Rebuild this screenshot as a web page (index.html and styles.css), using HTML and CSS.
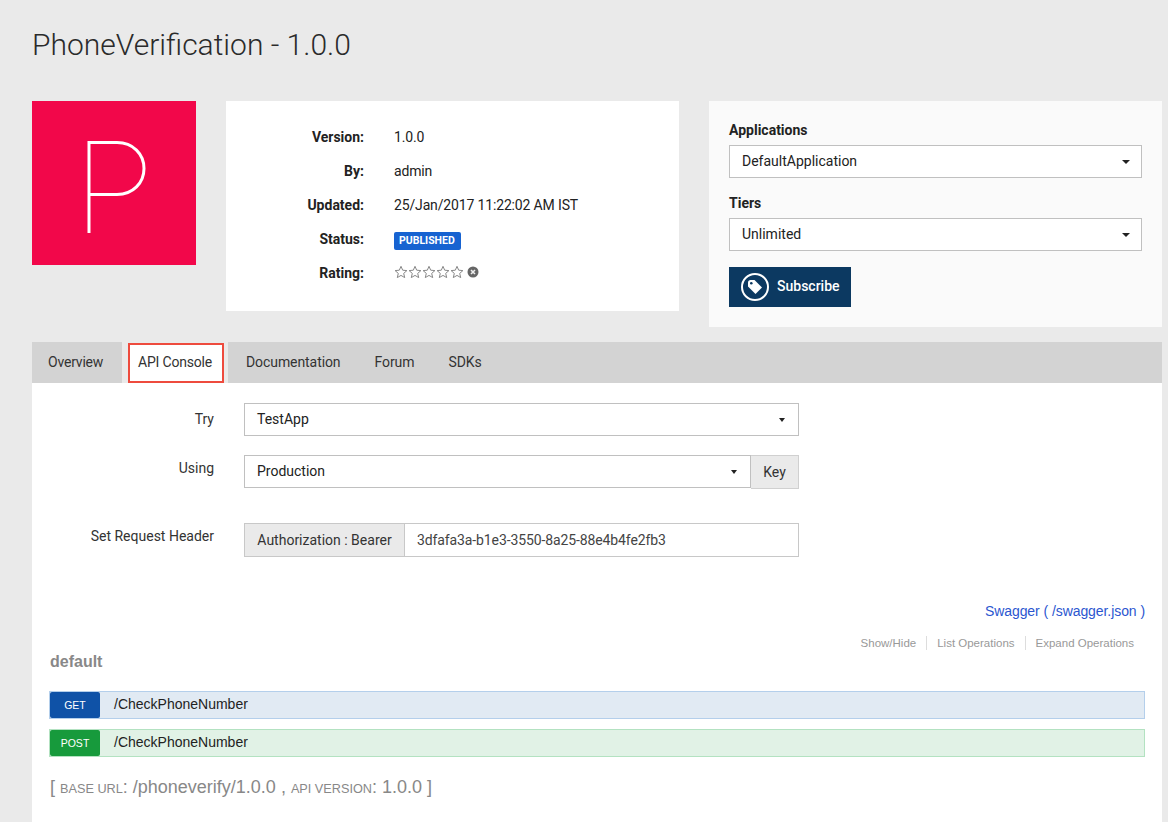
FILE: index.html
```html
<!DOCTYPE html>
<html>
<head>
  <title>PhoneVerification - 1.0.0</title>
  <link rel="stylesheet" href="styles.css">
</head>
<body>
  <div class="page">

    <h1 class="page-title">PhoneVerification - 1.0.0</h1>

    <div class="top-row">
      <div class="api-logo">
        <svg class="api-logo-letter" width="60" height="92" viewBox="0 0 60 92">
          <path d="M3 92V1.500H31C47 1.500 58 13 58 27.500C58 42 47 53.500 31 53.500H3" fill="none" stroke="#fff" stroke-width="3"/>
        </svg>
      </div>

      <div class="info-card">
        <div class="info-row"><span class="info-label">Version:</span><span class="info-value">1.0.0</span></div>
        <div class="info-row"><span class="info-label">By:</span><span class="info-value">admin</span></div>
        <div class="info-row"><span class="info-label">Updated:</span><span class="info-value">25/Jan/2017 11:22:02 AM IST</span></div>
        <div class="info-row"><span class="info-label">Status:</span><span class="status-badge">PUBLISHED</span></div>
        <div class="info-row">
          <span class="info-label">Rating:</span>
          <span class="stars">
            <svg width="14" height="14" viewBox="0 0 14 14"><path class="star" d="M7 1.300L8.700 5.200L12.900 5.600L9.700 8.400L10.700 12.600L7 10.400L3.300 12.600L4.300 8.400L1.100 5.600L5.300 5.200Z"/></svg>
            <svg width="14" height="14" viewBox="0 0 14 14"><path class="star" d="M7 1.300L8.700 5.200L12.900 5.600L9.700 8.400L10.700 12.600L7 10.400L3.300 12.600L4.300 8.400L1.100 5.600L5.300 5.200Z"/></svg>
            <svg width="14" height="14" viewBox="0 0 14 14"><path class="star" d="M7 1.300L8.700 5.200L12.900 5.600L9.700 8.400L10.700 12.600L7 10.400L3.300 12.600L4.300 8.400L1.100 5.600L5.300 5.200Z"/></svg>
            <svg width="14" height="14" viewBox="0 0 14 14"><path class="star" d="M7 1.300L8.700 5.200L12.900 5.600L9.700 8.400L10.700 12.600L7 10.400L3.300 12.600L4.300 8.400L1.100 5.600L5.300 5.200Z"/></svg>
            <svg width="14" height="14" viewBox="0 0 14 14"><path class="star" d="M7 1.300L8.700 5.200L12.900 5.600L9.700 8.400L10.700 12.600L7 10.400L3.300 12.600L4.300 8.400L1.100 5.600L5.300 5.200Z"/></svg>
            <svg class="rating-clear" width="12" height="12" viewBox="0 0 12 12">
              <circle cx="6" cy="6" r="5.500" fill="#666"/>
              <path d="M4 4L8 8M8 4L4 8" stroke="#eee" stroke-width="1.600"/>
            </svg>
          </span>
        </div>
      </div>

      <div class="subscribe-panel">
        <div class="panel-label">Applications</div>
        <div class="select-box">DefaultApplication<span class="caret"></span></div>
        <div class="panel-label panel-label-tiers">Tiers</div>
        <div class="select-box">Unlimited<span class="caret"></span></div>
        <button class="subscribe-button">
          <span class="subscribe-icon">
            <svg width="16" height="16" viewBox="0 0 16 16">
              <path d="M1 3.500C1 2 2 1 3.500 1H7.500L15 8.500L8.500 15L1 7.500Z" fill="#fff"/>
              <circle cx="4.300" cy="4.300" r="1.300" fill="#0c3961"/>
            </svg>
          </span>
          <span class="subscribe-text">Subscribe</span>
        </button>
      </div>
    </div>

    <div class="tabs">
      <div class="tab tab-first">Overview</div>
      <div class="tab-active">API Console</div>
      <div class="tab-rest">
        <div class="tab">Documentation</div>
        <div class="tab">Forum</div>
        <div class="tab">SDKs</div>
      </div>
    </div>

    <div class="tab-content">
      <div class="form-row form-row-try">
        <label class="form-label">Try</label>
        <div class="form-control select-box">TestApp<span class="caret caret-small"></span></div>
      </div>

      <div class="form-row form-row-using">
        <label class="form-label">Using</label>
        <div class="form-control input-group">
          <div class="select-box select-grow">Production<span class="caret caret-small"></span></div>
          <div class="key-button">Key</div>
        </div>
      </div>

      <div class="form-row form-row-header">
        <label class="form-label">Set Request Header</label>
        <div class="form-control input-group header-group">
          <div class="header-addon">Authorization : Bearer</div>
          <div class="header-token">3dfafa3a-b1e3-3550-8a25-88e4b4fe2fb3</div>
        </div>
      </div>

      <div class="swagger-box">
        <div class="swagger-link-row"><a class="swagger-link">Swagger ( /swagger.json )</a></div>

        <div class="resource-head">
          <div class="resource-name">default</div>
          <ul class="resource-actions">
            <li>Show/Hide</li>
            <li>List Operations</li>
            <li>Expand Operations</li>
          </ul>
        </div>

        <div class="operation operation-get">
          <span class="method method-get">GET</span>
          <span class="operation-path">/CheckPhoneNumber</span>
        </div>
        <div class="operation operation-post">
          <span class="method method-post">POST</span>
          <span class="operation-path">/CheckPhoneNumber</span>
        </div>

        <div class="base-url">
          [ <small>BASE URL</small>: /phoneverify/1.0.0 , <small>API VERSION</small>: 1.0.0 ]
        </div>
      </div>
    </div>

  </div>
</body>
</html>
```

FILE: styles.css
```css
html, body
{
  margin: 0;
  height: 822px;
  overflow: hidden;
}

body
{
  background-color: #eaeaea;
  font-family: Roboto, "Liberation Sans", sans-serif;
  font-size: 14px;
  color: #222;
}

.page
{
  padding: 0 6px 0 32px;
}

.page-title
{
  margin: 0;
  padding-top: 26px;
  height: 101px;
  box-sizing: border-box;
  font-size: 30px;
  line-height: 38px;
  font-weight: 300;
  color: #2b2b2b;
}

.top-row
{
  display: flex;
  align-items: flex-start;
  height: 241px;
}

.api-logo
{
  width: 164px;
  height: 164px;
  background-color: #f2074a;
  display: flex;
  justify-content: center;
  align-items: center;
}

.api-logo-letter
{
  margin-left: 4px;
  margin-top: 8px;
}

.info-card
{
  width: 453px;
  height: 210px;
  margin-left: 30px;
  padding-top: 19px;
  box-sizing: border-box;
  background-color: #fff;
}

.info-row
{
  display: flex;
  align-items: center;
  height: 34px;
}

.info-label
{
  width: 138px;
  margin-right: 30px;
  text-align: right;
  font-weight: 700;
}

.info-value
{
  letter-spacing: -0.15px;
}

.status-badge
{
  background-color: #1763d1;
  color: #fff;
  font-size: 10.500px;
  font-weight: 700;
  line-height: 18px;
  margin-top: 3px;
  padding: 0 6px 0 5px;
  border-radius: 2px;
}

.stars
{
  display: flex;
  align-items: center;
  margin-top: -2px;
}

.star
{
  fill: #fff;
  stroke: #888;
  stroke-width: 1;
}

.rating-clear
{
  margin-left: 3px;
}

.subscribe-panel
{
  width: 453px;
  height: 226px;
  margin-left: 30px;
  padding: 20px;
  box-sizing: border-box;
  background-color: #fafafa;
}

.panel-label
{
  font-weight: 700;
  line-height: 18px;
  margin-bottom: 6px;
}

.panel-label-tiers
{
  margin-top: 16px;
}

.select-box
{
  position: relative;
  height: 33px;
  box-sizing: border-box;
  border: 1px solid #c0c0c0;
  background-color: #fff;
  padding-left: 12px;
  line-height: 30px;
}

.caret
{
  position: absolute;
  right: 11px;
  top: 14px;
  border-top: 4px solid #222;
  border-left: 4px solid transparent;
  border-right: 4px solid transparent;
}

.subscribe-button
{
  display: flex;
  align-items: center;
  gap: 8px;
  width: 122px;
  height: 40px;
  margin-top: 16px;
  padding: 0 0 0 12px;
  border: none;
  background-color: #0c3961;
  color: #fff;
  font-family: Roboto, sans-serif;
  font-size: 14px;
  font-weight: 500;
}

.subscribe-text
{
  margin-bottom: 2px;
}

.subscribe-icon
{
  width: 28px;
  height: 28px;
  box-sizing: border-box;
  border: 2px solid #fff;
  border-radius: 50%;
  display: flex;
  justify-content: center;
  align-items: center;
}

.tabs
{
  display: flex;
  height: 41px;
}

.tab
{
  background-color: #d3d3d3;
  padding: 0 17px;
  line-height: 40px;
  color: #333;
  letter-spacing: -0.08px;
}

.tab-first
{
  width: 90px;
  padding: 0 0 0 16px;
  box-sizing: border-box;
  letter-spacing: -0.2px;
}

.tab-active
{
  width: 96px;
  height: 40px;
  box-sizing: border-box;
  margin: 1px 4px 0 6px;
  padding-right: 2px;
  border: 2px solid #ee4b3e;
  background-color: #fff;
  text-align: center;
  line-height: 35px;
  color: #333;
  letter-spacing: -0.2px;
}

.tab-rest
{
  flex: 1;
  display: flex;
  background-color: #d3d3d3;
  padding-left: 1px;
}

.tab-content
{
  height: 439px;
  background-color: #fff;
  padding-top: 20px;
  box-sizing: border-box;
}

.form-row
{
  display: flex;
}

.form-row-using
{
  margin-top: 19px;
}

.form-row-header
{
  margin-top: 34px;
}

.form-label
{
  width: 182px;
  margin-right: 30px;
  text-align: right;
  line-height: 30px;
  color: #333;
}

.form-row-try .form-label
{
  line-height: 32px;
}

.form-row-using .form-label
{
  line-height: 26px;
}

.form-row-header .form-label
{
  line-height: 26px;
}

.form-control
{
  width: 555px;
}

.input-group
{
  display: flex;
}

.select-grow
{
  flex: 1;
}

.caret-small
{
  top: 14px;
  right: 13px;
  border-top-width: 4px;
  border-left-width: 3.500px;
  border-right-width: 3.500px;
}

.key-button
{
  width: 48px;
  height: 34px;
  box-sizing: border-box;
  border: 1px solid #d0d0d0;
  border-left: none;
  background-color: #eaeaea;
  text-align: center;
  line-height: 33px;
  color: #333;
}

.header-group
{
  height: 34px;
  box-sizing: border-box;
  border: 1px solid #c8c8c8;
  line-height: 32px;
}

.header-addon
{
  width: 160px;
  box-sizing: border-box;
  background-color: #eaeaea;
  border-right: 1px solid #c8c8c8;
  text-align: center;
  color: #333;
}

.header-token
{
  padding-left: 12px;
  color: #444;
  letter-spacing: -0.11px;
}

.swagger-box
{
  font-family: "Liberation Sans", Arial, sans-serif;
  padding: 0 17px 0 18px;
}

.swagger-link-row
{
  margin-top: 46px;
  text-align: right;
  line-height: 16px;
}

.swagger-link
{
  color: #2b56d0;
  letter-spacing: -0.07px;
}

.resource-head
{
  display: flex;
  justify-content: space-between;
  align-items: flex-start;
  margin-top: 16px;
  height: 56px;
}

.resource-name
{
  font-size: 16px;
  font-weight: 700;
  color: #888;
  margin-top: 18px;
}

.resource-actions
{
  display: flex;
  list-style: none;
  margin: 1px 11px 0 0;
  padding: 0;
  font-size: 11.500px;
  line-height: 14px;
  color: #999;
}

.resource-actions li
{
  padding: 0 10px;
  border-right: 1px solid #ddd;
}

.resource-actions li:last-child
{
  padding-right: 0;
  border-right: none;
}

.operation
{
  display: flex;
  align-items: center;
  height: 28px;
  margin-left: -1px;
  box-sizing: border-box;
  border: 1px solid;
  margin-bottom: 10px;
}

.operation-get
{
  background-color: #e1eaf3;
  border-color: #b4cfeb;
}

.operation-post
{
  background-color: #e1f2e6;
  border-color: #b3e2c1;
}

.method
{
  width: 50px;
  height: 26px;
  border-radius: 2px;
  color: #fff;
  font-size: 10.500px;
  text-align: center;
  line-height: 26px;
}

.method-get
{
  background-color: #0f52a7;
}

.method-post
{
  background-color: #179a3c;
}

.operation-path
{
  margin-left: 14px;
  margin-bottom: 2px;
  color: #222;
}

.base-url
{
  margin-top: 19px;
  font-size: 18px;
  line-height: 22px;
  color: #888;
}

.base-url small
{
  font-size: 12.700px;
}
```
